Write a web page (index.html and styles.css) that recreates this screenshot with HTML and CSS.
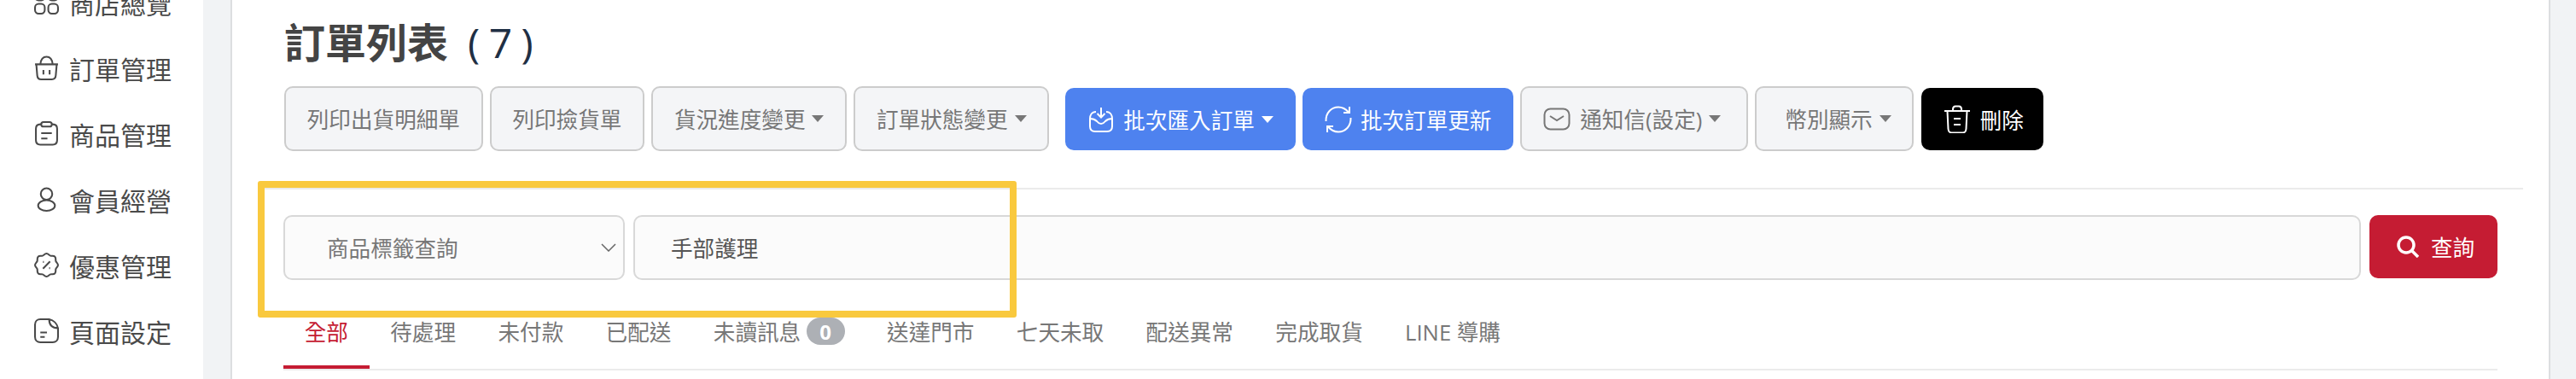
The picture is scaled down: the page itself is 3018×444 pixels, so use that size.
FILE: index.html
```html
<!DOCTYPE html>
<html lang="zh-Hant">

<head>
  <title>訂單列表</title>
  <link rel="stylesheet" href="styles.css">
</head>

<body>
  <aside class="sidebar">
    <nav class="side-nav">
      <a class="side-item">
        <svg class="side-icon" viewBox="0 0 28 28"><rect x="1" y="1" width="11" height="11" rx="4"/><rect x="16" y="1" width="11" height="11" rx="4"/><rect x="1" y="16" width="11" height="11" rx="4"/><rect x="16" y="16" width="11" height="11" rx="4"/></svg>
        商店總覽
      </a>
      <a class="side-item">
        <svg class="side-icon" viewBox="0 0 28 28"><path d="M1 10h26M2.500 10.500l1 12c.2 3 2 4.500 4.500 4.500h12c2.500 0 4.300-1.500 4.500-4.500l1-12M7 10c.5-5 3-8.500 7-8.500s6.500 3.500 7 8.500M10.500 16.500v5M17.500 16.500v5"/></svg>
        訂單管理
      </a>
      <a class="side-item">
        <svg class="side-icon" viewBox="0 0 28 28"><path d="M8 3.500H7C4 3.500 2 5.500 2 8.500v13C2 24.500 4 26.500 7 26.500h14c3 0 5-2 5-5v-13c0-3-2-5-5-5h-1M10.500 1h7C19 1 20 2 20 3.500S19 6 17.500 6h-7C9 6 8 5 8 3.500S9 1 10.500 1zM8 13.500h12M8 19.500h7"/></svg>
        商品管理
      </a>
      <a class="side-item">
        <svg class="side-icon" viewBox="0 0 28 28"><circle cx="14" cy="8" r="6.500"/><ellipse cx="14" cy="21" rx="9.500" ry="6"/></svg>
        會員經營
      </a>
      <a class="side-item">
        <svg class="side-icon" viewBox="0 0 28 28"><path d="M14 1c2 0 3 2 4.500 2.500S22 3 23.500 4.500 24 8 24.500 9.500 27 12 27 14s-2 3-2.500 4.500.5 3.500-1 5-3.500.5-5 1S16 27 14 27s-3-2-4.500-2.500-3.500.5-5-1-.5-3.500-1-5S1 16 1 14s2-3 2.500-4.500-.5-3.500 1-5 3.500-.5 5-1S12 1 14 1zM18 10l-8 8M10 10.500h1M17 17.500h1"/></svg>
        優惠管理
      </a>
      <a class="side-item">
        <svg class="side-icon" viewBox="0 0 28 28"><path d="M17 1H7C3.500 1 1 3.500 1 7v14c0 3.500 2.500 6 6 6h14c3.500 0 6-2.500 6-6V11C26 6 22 2 17 1c0 6 3 10 10 10M7 16h7.500M7 21h5"/></svg>
        頁面設定
      </a>
    </nav>
  </aside>

  <main class="card">
    <h1 class="title">訂單列表<span class="title-count">( 7 )</span></h1>

    <div class="toolbar">
      <button class="btn">列印出貨明細單</button>
      <button class="btn">列印撿貨單</button>
      <button class="btn">貨況進度變更<i class="caret"></i></button>
      <button class="btn">訂單狀態變更<i class="caret"></i></button>
      <button class="btn btn-blue btn-import">
        <svg class="icon-inbox" viewBox="0 0 28 30"><path d="M14 1v11M9.500 8l4.500 4.500L18.500 8M8 6C3 6 1 10 1 14v9c0 4 2 6 6 6h14c4 0 6-2 6-6v-9c0-4-2-8-7-8M1 14c4 0 6 1 8 3 2 2.500 3 3 5 3s3-.5 5-3c2-2 4-3 8-3"/></svg>
        批次匯入訂單<i class="caret"></i>
      </button>
      <button class="btn btn-blue btn-refresh">
        <svg class="icon-refresh" viewBox="0 0 32 32"><path d="M1.500 18C1 8 8 1.500 16 1.500c5 0 9 2.500 12 6M29 1v7h-7M30.500 14C31 24 24 30.500 16 30.500c-5 0-9-2.500-12-6M3 31v-7h7"/></svg>
        批次訂單更新
      </button>
      <button class="btn btn-mail">
        <svg class="icon-mail" viewBox="0 0 32 27"><rect x="1.500" y="1.500" width="29" height="24" rx="7"/><path d="M8 10l8 5 8-5"/></svg>
        通知信(設定)<i class="caret"></i>
      </button>
      <button class="btn btn-currency">幣別顯示<i class="caret"></i></button>
      <button class="btn btn-black">
        <svg class="icon-trash" viewBox="0 0 30 33"><path d="M0 7h30M10 6.500V5c0-2.500 1-3.500 3-3.500h4c2 0 3 1 3 3.500v1.500M3.500 7l1 21c.2 3 1.500 4.500 4 4.500h13c2.500 0 3.800-1.500 4-4.500l1-21M11 16h8M11 23h8"/></svg>
        刪除
      </button>
    </div>

    <hr class="divider">

    <form class="search">
      <div class="search-select">商品標籤查詢<svg class="chevron" viewBox="0 0 18 10"><path d="M1 1l8 8 8-8"/></svg></div>
      <div class="search-input">手部護理</div>
      <button class="btn-search" type="button">
        <svg class="search-icon" viewBox="0 0 26 26"><circle cx="11" cy="11" r="9"/><path d="M17.500 17.500L25 25"/></svg>
        查詢
      </button>
    </form>

    <ul class="tabs">
      <li class="tab active">全部</li>
      <li class="tab">待處理</li>
      <li class="tab">未付款</li>
      <li class="tab">已配送</li>
      <li class="tab">未讀訊息<span class="badge">0</span></li>
      <li class="tab">送達門市</li>
      <li class="tab">七天未取</li>
      <li class="tab">配送異常</li>
      <li class="tab">完成取貨</li>
      <li class="tab">LINE 導購</li>
    </ul>

    <div class="highlight"></div>
  </main>
</body>

</html>
```

FILE: styles.css
```css
html, body {
  height: 444px;
  overflow: hidden;
}

body {
  margin: 0;
  display: flex;
  background: #f1f3f5;
  font-family: "Open Sans", "Noto Sans CJK TC", sans-serif;
  color: #444;
}

/* sidebar */
.sidebar {
  width: 238px;
  flex: none;
  background: #fff;
}

.side-nav {
  margin-top: -36px;
  padding-left: 40px;
}

.side-item {
  display: flex;
  align-items: center;
  gap: 12px;
  height: 77px;
  font-size: 30px;
  color: #4a4a4a;
}

.side-icon {
  width: 29px;
  height: 29px;
  fill: none;
  stroke: #4a4a4a;
  stroke-width: 2;
  flex: none;
}

/* main card */
.card {
  position: relative;
  width: 2718px;
  height: 444px;
  margin-left: 32px;
  box-sizing: border-box;
  border-left: 2px solid #dcdee0;
  border-right: 2px solid #dcdee0;
  background: #fff;
  padding: 0 60px 0 61px;
}

.title {
  margin: 21px 0 0;
  height: 80px;
  font-size: 48px;
  line-height: 58px;
  font-weight: 700;
  color: #444;
}

.title-count {
  margin-left: 23px;
  font-weight: 400;
  color: #1f2f44;
  word-spacing: -2px;
}

.toolbar {
  display: flex;
  align-items: flex-start;
  gap: 8px;
}

.btn {
  display: flex;
  align-items: center;
  height: 76px;
  box-sizing: border-box;
  padding: 0 24.75px;
  border: 2px solid #ccc;
  border-radius: 10px;
  background: #f4f5f7;
  font-family: inherit;
  font-size: 25.6px;
  color: #777;
  white-space: nowrap;
}

.btn-blue,
.btn-black {
  margin-top: 2px;
  height: 73px;
  border: 0;
  color: #fff;
}

.btn-blue {
  background: #4e82ef;
}

.btn-import {
  margin-left: 11px;
  padding: 0 26px 0 28px;
}

.btn-refresh {
  padding: 0 26px 0 26px;
}

.btn-mail {
  padding-right: 30px;
}

.btn-black {
  margin-left: 1px;
  padding: 0 23px 0 27px;
  background: #000;
}

.btn-currency {
  padding: 0 24px 0 33px;
}

.icon-inbox,
.icon-refresh,
.icon-mail,
.icon-trash {
  fill: none;
  stroke: currentColor;
  stroke-width: 2;
  flex: none;
}

.icon-inbox {
  width: 28px;
  height: 30px;
  margin-right: 12px;
}

.icon-refresh {
  width: 32px;
  height: 32px;
  margin-right: 10px;
}

.icon-mail {
  width: 32px;
  height: 27px;
  margin-right: 11px;
}

.icon-trash {
  width: 30px;
  height: 33px;
  margin-right: 12px;
}

.caret {
  width: 0;
  height: 0;
  margin-left: 8px;
  border-left: 7.5px solid transparent;
  border-right: 7.5px solid transparent;
  border-top: 8px solid currentColor;
}

.divider {
  height: 2px;
  margin: 43px 0 0 -30px;
  width: 2653px;
  border: 0;
  background: #ebebeb;
}

/* search row */
.search {
  display: flex;
  gap: 10px;
  margin: 30px 0 0 -1px;
}

.search-select,
.search-input {
  display: flex;
  align-items: center;
  height: 76px;
  box-sizing: border-box;
  border: 2px solid #d8d8d8;
  border-radius: 10px;
  background: #fbfbfb;
  font-size: 25.6px;
}

.search-select {
  justify-content: space-between;
  width: 400px;
  padding: 0 8px 0 49px;
  color: #777;
}

.chevron {
  width: 18px;
  height: 10px;
  fill: none;
  stroke: #666;
  stroke-width: 1.5;
}

.search-input {
  flex: 1;
  padding-left: 42px;
  color: #555;
}

.btn-search {
  display: flex;
  align-items: center;
  gap: 14px;
  width: 150px;
  height: 74px;
  padding: 0 0 0 32px;
  border: 0;
  border-radius: 10px;
  background: #c51c33;
  color: #fff;
  font-family: inherit;
  font-size: 25.6px;
}

.search-icon {
  width: 26px;
  height: 26px;
  fill: none;
  stroke: #fff;
  stroke-width: 3.5;
}

/* tabs */
.tabs {
  display: flex;
  height: 64px;
  box-sizing: border-box;
  margin: 42px 0 0 -1px;
  padding: 0;
  list-style: none;
  border-bottom: 2px solid #ebebeb;
}

.tab {
  display: flex;
  align-items: center;
  height: 62px;
  box-sizing: border-box;
  padding: 0 24.7px 26px;
  font-size: 25.6px;
  color: #777;
  white-space: nowrap;
}

.tab.active {
  color: #c51c33;
  border-bottom: 4px solid #c51c33;
  padding-bottom: 22px;
}

.badge {
  display: flex;
  align-items: center;
  justify-content: center;
  width: 45px;
  height: 32px;
  margin-left: 6.5px;
  border-radius: 16px;
  background: #adb0b5;
  color: #fff;
  font-size: 24px;
  font-weight: 700;
}

/* yellow annotation frame drawn over the search row */
.highlight {
  position: absolute;
  left: 30px;
  top: 212px;
  width: 889px;
  height: 160px;
  box-sizing: border-box;
  border: 8px solid #f9c93e;
  border-radius: 3px;
}
```
